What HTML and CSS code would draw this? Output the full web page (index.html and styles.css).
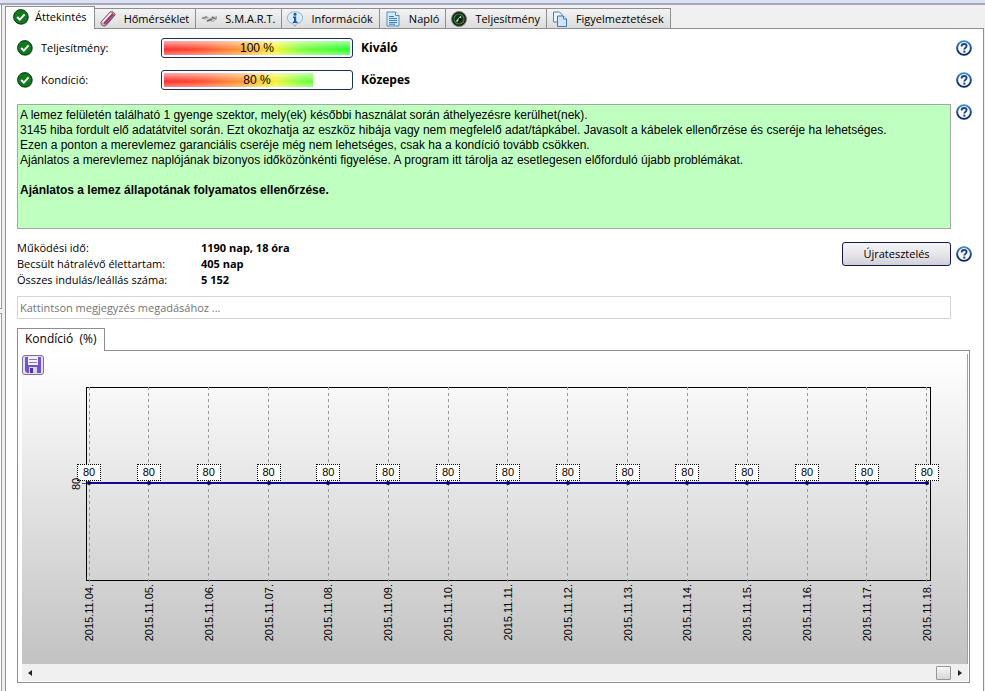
FILE: index.html
```html
<!DOCTYPE html>
<html lang="hu">
<head>
  <meta charset="UTF-8" />
  <meta name="viewport" content="width=device-width, initial-scale=1" />
  <title>Merevlemez áttekintés</title>
  <link rel="stylesheet" href="styles.css">
</head>
<body>

  <!-- Shared icons -->
  <svg class="symbols" aria-hidden="true">
    <symbol id="icon-ok" viewBox="0 0 16 16">
      <circle cx="8.6" cy="8.6" r="7.2" fill="#8a948a" />
      <circle cx="7.8" cy="7.8" r="7.2" fill="#107a1c" stroke="#073d10" stroke-width="1" />
      <path d="M4.2 8l2.6 2.6 4.8-5.2" fill="none" stroke="#fff" stroke-width="2" />
    </symbol>
    <symbol id="icon-help" viewBox="0 0 16 16">
      <circle cx="8" cy="8" r="6.9" fill="#f4f9ff" stroke="url(#help-ring)" stroke-width="1.9" />
      <path d="M5.6 6.5c0-1.6 1-2.5 2.5-2.5s2.5.9 2.5 2.1c0 1.6-2.3 1.7-2.3 3.4" fill="none" stroke="#1c3f86" stroke-width="1.8" />
      <rect x="7.3" y="10.6" width="2" height="2" fill="#1c3f86" />
    </symbol>
    <linearGradient id="help-ring" x1="0" y1="0" x2="0" y2="1">
      <stop offset="0" stop-color="#3f8cc0" />
      <stop offset="0.6" stop-color="#183f80" />
      <stop offset="1" stop-color="#10235c" />
    </linearGradient>
  </svg>

  <div class="title-strip"></div>

  <div class="window">
    <aside class="side">
      <div class="side-top"></div>
      <div class="side-bottom"></div>
    </aside>

    <main class="main">
      <nav class="tabs">
        <button class="tab active">
          <svg class="icon"><use href="#icon-ok" /></svg>
          <span>Áttekintés</span>
        </button>
        <button class="tab">
          <svg class="icon" viewBox="0 0 16 16">
            <path d="M.8 11.2L10 1q4-1.200 5.200 2.800L6 14.600q-4.600 1.600-5.200-3.400z" fill="#c9b3c2" stroke="#6c5866" stroke-width="1" />
            <path d="M2.600 11.400L11.200 2" stroke="#fbf4f8" stroke-width="1.500" />
            <path d="M4 12.800L13.200 2.800" stroke="#b02a68" stroke-width="2" />
            <path d="M5.600 13.600L14.400 4" stroke="#7a3458" stroke-width="1" />
          </svg>
          <span>Hőmérséklet</span>
        </button>
        <button class="tab">
          <svg class="icon" viewBox="0 0 16 16">
            <path d="M0 7l5-2 3 1-4 3z" fill="#b4b4b4" />
            <path d="M1 7.500l4-1.500 1.500 1" fill="none" stroke="#777" />
            <path d="M5 10l6-5 2 1 3-1v3l-4 3-3-1-3 1z" fill="#a2a2a2" />
            <path d="M6 10l5-1.500M11 6l3 2" stroke="#5c5c5c" />
            <path d="M8 7l3-1.500M11 9.500l3-1" stroke="#e8e8e8" />
          </svg>
          <span>S.M.A.R.T.</span>
        </button>
        <button class="tab">
          <svg class="icon" viewBox="0 0 16 16">
            <path d="M8 .8a6.800 6 0 0 1 1.500 12L8 15.500l-1.500-2.700A6.800 6 0 0 1 8 .8z" fill="#d9eefa" stroke="#8fb4cc" />
            <circle cx="8" cy="3.200" r="1.500" fill="#1d57a6" />
            <path d="M6 5.500h3.200v5h1.300V12H5.800v-1.500H7V7H6z" fill="#1d57a6" />
          </svg>
          <span>Információk</span>
        </button>
        <button class="tab">
          <svg class="icon" viewBox="0 0 16 16">
            <path d="M2 1h8.500L14 4.500V15H2z" fill="#d5ebfc" stroke="#4f8fcb" />
            <path d="M10.500 1v3.500H14" fill="#fff" stroke="#4f8fcb" />
            <path d="M4 5.500h5M4 7.500h8M4 9.500h8M4 11.500h8M4 13.200h6" stroke="#3c7cbc" />
          </svg>
          <span>Napló</span>
        </button>
        <button class="tab">
          <svg class="icon" viewBox="0 0 16 16">
            <circle cx="8" cy="8" r="7.500" fill="#1c1c16" stroke="#8a7a68" />
            <circle cx="8" cy="8" r="5" fill="#0e2e18" stroke="#2f8a4a" stroke-width="1.200" />
            <path d="M5.500 10.500L10 5.500" stroke="#c8f0c0" stroke-width="1.500" />
            <circle cx="9" cy="8.500" r="1.500" fill="#0a0a0a" />
            <path d="M11 10.500l1.500 1.500" stroke="#d03a2a" />
          </svg>
          <span>Teljesítmény</span>
        </button>
        <button class="tab">
          <svg class="icon" viewBox="0 0 16 16">
            <path d="M1.500 1h6L10 3.500V11H1.500z" fill="#e8f3fd" stroke="#4d82bb" />
            <path d="M5.500 5h6L14.500 8v7.500h-9z" fill="#cfe5fa" stroke="#3f76b2" />
            <path d="M11.500 5v3h3" fill="#fff" stroke="#3f76b2" />
          </svg>
          <span>Figyelmeztetések</span>
        </button>
      </nav>

      <section class="panel">
        <div class="status-row">
          <svg class="icon"><use href="#icon-ok" /></svg>
          <span class="status-label" id="perf-label">Teljesítmény:</span>
          <div class="bar" role="progressbar" aria-labelledby="perf-label" aria-valuenow="100">
            <div class="bar-fill" style="width: 100%"></div>
            <span class="bar-text">100 %</span>
          </div>
          <strong>Kiváló</strong>
          <button class="help" aria-label="Súgó"><svg class="icon"><use href="#icon-help" /></svg></button>
        </div>
        <div class="status-row">
          <svg class="icon"><use href="#icon-ok" /></svg>
          <span class="status-label" id="health-label">Kondíció:</span>
          <div class="bar" role="progressbar" aria-labelledby="health-label" aria-valuenow="80">
            <div class="bar-fill" style="width: 80%"></div>
            <span class="bar-text">80 %</span>
          </div>
          <strong>Közepes</strong>
          <button class="help" aria-label="Súgó"><svg class="icon"><use href="#icon-help" /></svg></button>
        </div>

        <div class="message-row">
          <div class="message">
            <p>A lemez felületén található 1 gyenge szektor, mely(ek) későbbi használat során áthelyezésre kerülhet(nek).</p>
            <p>3145 hiba fordult elő adatátvitel során. Ezt okozhatja az eszköz hibája vagy nem megfelelő adat/tápkábel. Javasolt a kábelek ellenőrzése és cseréje ha lehetséges.</p>
            <p>Ezen a ponton a merevlemez garanciális cseréje még nem lehetséges, csak ha a kondíció tovább csökken.</p>
            <p>Ajánlatos a merevlemez naplójának bizonyos időközönkénti figyelése. A program itt tárolja az esetlegesen előforduló újabb problémákat.</p>
            <p class="advice">Ajánlatos a lemez állapotának folyamatos ellenőrzése.</p>
          </div>
          <button class="help" aria-label="Súgó"><svg class="icon"><use href="#icon-help" /></svg></button>
        </div>

        <div class="info-row">
          <dl class="info">
            <dt>Működési idő:</dt><dd>1190 nap, 18 óra</dd>
            <dt>Becsült hátralévő élettartam:</dt><dd>405 nap</dd>
            <dt>Összes indulás/leállás száma:</dt><dd>5 152</dd>
          </dl>
          <button class="retest">Újratesztelés</button>
          <button class="help" aria-label="Súgó"><svg class="icon"><use href="#icon-help" /></svg></button>
        </div>

        <input class="comment" type="text" aria-label="Megjegyzés" placeholder="Kattintson megjegyzés megadásához ..." />

        <button class="chart-tab">Kondíció&nbsp; (%)</button>
        <div class="chart-frame">
          <div class="chart">
            <button class="save" aria-label="Mentés">
              <svg class="icon" viewBox="0 0 16 16">
                <path d="M0 0h16v16H2l-2-2z" fill="#6f56c2" />
                <rect x="3" y="0" width="10" height="8" fill="#f6f2ff" />
                <path d="M4 2.500h8M4 5.500h8" stroke="#8a76c8" />
                <rect x="4" y="10" width="8" height="6" fill="#d9d2f4" />
                <rect x="5" y="11" width="3" height="5" fill="#4a34a0" />
              </svg>
            </button>
            <div class="plot">
              <span class="axis-label">80</span>
              <span class="axis-tick"></span>
              <div class="plot-area"></div>
              <div class="series"></div>
              <ul class="days" id="days"></ul>
            </div>
          </div>
          <div class="scrollbar">
            <button class="scroll-btn" aria-label="Balra">
              <svg width="4" height="6" viewBox="0 0 4 6"><path d="M4 0v6L0 3z" fill="#222" /></svg>
            </button>
            <div class="scroll-thumb"></div>
            <button class="scroll-btn" aria-label="Jobbra">
              <svg width="4" height="6" viewBox="0 0 4 6"><path d="M0 0v6l4-3z" fill="#222" /></svg>
            </button>
          </div>
        </div>
      </section>
    </main>
  </div>

  <script src="script.js"></script>
</body>
</html>
```
FILE: styles.css
```css
* {
  box-sizing: border-box;
}
body {
  margin: 0;
  min-height: 100vh;
  display: flex;
  flex-direction: column;
  font-family: 'Open Sans', 'Segoe UI', sans-serif;
  font-size: 11px;
  line-height: 16px;
  background: #f0f0f0;
  color: #000;
}
button {
  font: inherit;
  color: inherit;
  padding: 0;
  border: none;
  background: none;
  cursor: pointer;
}
p, dl, dd, ul {
  margin: 0;
  padding: 0;
}
.symbols {
  position: absolute;
  width: 0;
  height: 0;
}
.icon {
  width: 16px;
  height: 16px;
  flex: none;
  display: block;
}

/* WINDOW */
.title-strip {
  height: 5px;
  background: #dae2f3;
  border-bottom: 2px solid #a3a9b8;
}
.window {
  flex: 1;
  display: flex;
}
.side {
  width: 2px;
  margin-right: 3px;
  display: flex;
  flex-direction: column;
  gap: 4px;
  background: #f0f0f0;
}
.side-top,
.side-bottom {
  background: #fff;
  border-right: 1px solid #9a9a9a;
}
.side-top {
  height: 304px;
  border-bottom: 1px solid #9a9a9a;
}
.side-bottom {
  flex: 1;
  border-top: 1px solid #9a9a9a;
}
.main {
  flex: 1;
  min-width: 0;
  display: flex;
  flex-direction: column;
  padding: 1px 1px 0 0;
}

/* TABS */
.tabs {
  display: flex;
  align-items: flex-end;
}
.tab {
  height: 20px;
  display: flex;
  align-items: center;
  gap: 8px;
  padding: 0 6px 0 5px;
  white-space: nowrap;
  background: linear-gradient(#f3f3f3, #dcdcdc);
  border: 1px solid #8c8e94;
  border-bottom: none;
  border-left-width: 0;
}
.tab.active {
  height: 23px;
  gap: 6px;
  padding: 0 7px 3px;
  margin-bottom: -1px;
  background: #fff;
  border-left-width: 1px;
  position: relative;
}
.panel {
  flex: 1;
  padding: 3px 11px 8px;
  background: #fff;
  border: 1px solid #8c8e94;
  border-bottom: none;
}

/* STATUS ROWS */
.status-row {
  height: 32px;
  display: flex;
  align-items: center;
}
.status-label {
  width: 120px;
  margin-left: 8px;
}
.status-row strong {
  font-size: 12px;
}
.bar {
  width: 192px;
  height: 20px;
  margin-right: 8px;
  padding: 2px;
  display: grid;
  border: 1px solid #17305c;
  border-radius: 3px;
}
.bar-fill,
.bar-text {
  grid-area: 1 / 1;
}
.bar-fill {
  background:
    linear-gradient(rgba(255, 255, 255, 0.6), rgba(255, 255, 255, 0) 60%, rgba(255, 255, 255, 0.4)),
    linear-gradient(90deg, #ff2d2d, #ff5030 20%, #ff9a30 42%, #f4f432 60%, #7dff3c 74%, #28ff28);
  background-size: 186px 100%;
}
.bar-text {
  text-align: center;
  font-family: 'Liberation Sans', Arial, sans-serif;
  font-size: 12px;
  line-height: 14px;
}
.help {
  margin-left: auto;
}

/* MESSAGE */
.message-row {
  display: flex;
  align-items: flex-start;
  gap: 5px;
  margin-top: 8px;
}
.message {
  flex: 1;
  min-height: 125px;
  padding: 3px 2px;
  font-family: 'Liberation Sans', Arial, sans-serif;
  font-size: 12px;
  line-height: 15px;
  background: #bfffbf;
  border: 1px solid #a0aaa0;
}
.advice {
  margin-top: 15px;
  font-weight: bold;
}

/* INFO */
.info-row {
  display: flex;
  align-items: flex-start;
  gap: 5px;
  margin-top: 11px;
}
.info {
  flex: 1;
  display: grid;
  grid-template-columns: 184px 1fr;
}
.info dd {
  font-weight: bold;
}
.info-row .help {
  margin-top: 6px;
}
.info-row .retest {
  width: 109px;
  height: 24px;
  margin-top: 2px;
  background: linear-gradient(#f4f4f6, #e6e6ea 50%, #cfcfd6);
  border: 1px solid #17174a;
  border-radius: 3px;
}
.comment {
  display: block;
  width: calc(100% - 21px);
  height: 23px;
  margin-top: 8px;
  padding: 0 2px;
  font: inherit;
  border: 1px solid #d4d4d4;
}
.comment::placeholder {
  color: #757575;
  opacity: 1;
}

/* CHART */
.chart-tab {
  display: block;
  position: relative;
  height: 23px;
  margin: 9px 0 -1px;
  padding: 0 7px 2px;
  font-size: 12px;
  background: #fff;
  border: 1px solid #8c8e94;
  border-bottom: none;
}
.chart-frame {
  margin-right: 2px;
  padding: 3px 1px 1px 4px;
  border: 1px solid #8c8e94;
}
.chart {
  height: 310px;
  padding-top: 1px;
  background: linear-gradient(#fff, #c2c2c2);
  border-right: 1px solid #a0a0a0;
}
.save {
  display: block;
  width: 22px;
  height: 20px;
  padding: 1px 2px;
  background: #e4e0f4;
  border: 1px solid #77739a;
  border-radius: 3px;
}
.plot {
  display: grid;
  grid-template-columns: 15px 1fr;
  margin: 12px 36px 0 49px;
}
.plot-area,
.series,
.days {
  grid-area: 1 / 2;
}
.plot-area {
  height: 194px;
  border: 1px solid #000;
}
.series {
  height: 2px;
  margin: 95px 3px 0;
  background: #0a0a96;
}
.axis-label,
.axis-tick {
  grid-area: 1 / 1;
}
.axis-label {
  justify-self: start;
  height: 14px;
  margin-top: 89px;
  writing-mode: vertical-rl;
  transform: rotate(180deg);
  font-family: 'Liberation Sans', Arial, sans-serif;
  line-height: 10px;
}
.axis-tick {
  justify-self: end;
  width: 4px;
  height: 1px;
  margin-top: 96px;
  background: #555;
}
.days {
  display: flex;
  justify-content: space-between;
  margin: 0 -8px 0 -9px;
  list-style: none;
  font-family: 'Liberation Sans', Arial, sans-serif;
}
.day {
  width: 24px;
  display: flex;
  flex-direction: column;
  align-items: center;
  background: repeating-linear-gradient(#9a9a9a 0 3px, transparent 3px 6px) center top / 1px 198px no-repeat;
}
.day-value {
  width: 24px;
  height: 17px;
  margin-top: 77px;
  line-height: 15px;
  text-align: center;
  background: #fff;
  border: 1px dotted #000;
}
.day-dot {
  width: 4px;
  height: 4px;
  border-radius: 2px;
  background: #000050;
}
.day-date {
  margin-top: 99px;
  writing-mode: vertical-rl;
  transform: rotate(180deg);
  line-height: 14px;
}

/* SCROLLBAR */
.scrollbar {
  height: 17px;
  display: flex;
  align-items: center;
  background: #f0f0f0;
}
.scroll-btn {
  width: 16px;
  height: 16px;
  display: flex;
  align-items: center;
  justify-content: center;
}
.scroll-thumb {
  width: 15px;
  height: 14px;
  margin-left: auto;
  margin-right: 1px;
  background: linear-gradient(#f6f6f6, #d6d6d6);
  border: 1px solid #979797;
  border-radius: 1px;
}
```
FILE: script.js
```js
const days = document.getElementById('days');

// Condition is 80% on every day from 4th to 18th November
for (let d = 4; d <= 18; d++) {
  const li = document.createElement('li');
  li.className = 'day';
  li.innerHTML = `
    <span class="day-value">80</span>
    <span class="day-dot"></span>
    <span class="day-date">2015.11.${String(d).padStart(2, '0')}.</span>
  `;
  days.appendChild(li);
}
```
